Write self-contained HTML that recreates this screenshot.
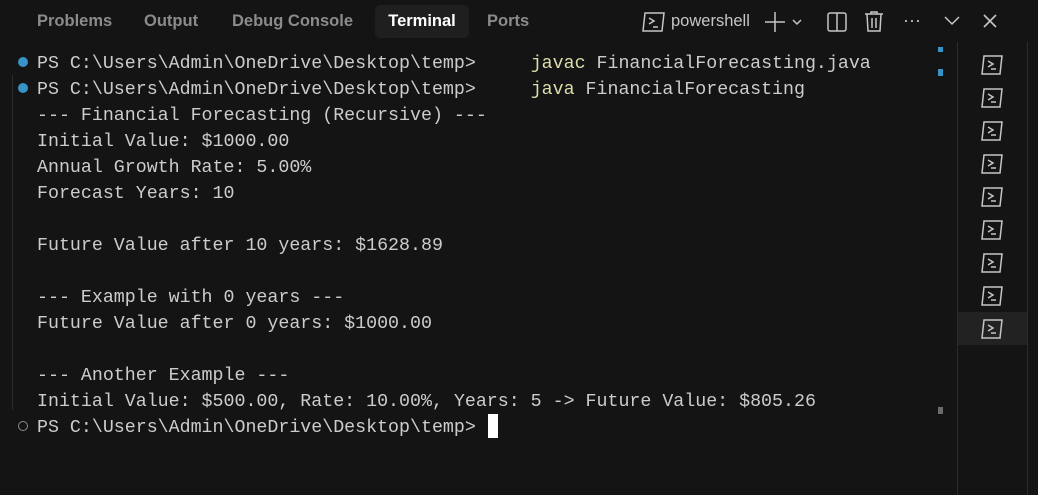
<!DOCTYPE html>
<html><head><style>
body{margin:0;width:1038px;height:495px;background:#141414;overflow:hidden;position:relative;font-family:"Liberation Sans",sans-serif}
.tab{position:absolute;top:5px;height:33px;line-height:33px;font-size:16.5px;font-weight:bold;color:#8b8b8b}
.term{position:absolute;left:37px;top:51px;font-family:"Liberation Mono",monospace;font-size:18.3px;line-height:26px;color:#cccccc;white-space:pre}
.y{color:#dcdcaa}
.dot{position:absolute;left:18px;width:10px;height:10px;border-radius:50%;background:#3794c7}
.ic{position:absolute;color:#c5c5c5}
.side{position:absolute;left:957px;top:42px;width:69px;height:453px;border-left:1px solid #2b2b2b;border-right:1px solid #2b2b2b}
.si{position:absolute;left:0;width:69px;height:33px}
</style></head><body>
<div class="tab" style="left:37px">Problems</div>
<div class="tab" style="left:144px">Output</div>
<div class="tab" style="left:232px">Debug Console</div>
<div class="tab" style="left:375px;width:94px;background:#1f1f1f;border-radius:5px;color:#fff;text-align:center">Terminal</div>
<div class="tab" style="left:487px">Ports</div>

<svg style="position:absolute;left:641px;top:10px" width="26" height="24" viewBox="0 0 26 24" fill="none" stroke="#c5c5c5" stroke-width="1.5"><path d="M4 3h19l-2 18H2z"/><path d="M8 8l5 3-5 3M12 17h5"/></svg>
<div class="tab" style="left:671px;color:#c5c5c5;font-weight:normal">powershell</div>
<svg style="position:absolute;left:764px;top:11px" width="44" height="22" fill="none" stroke="#c5c5c5" stroke-width="1.5"><path d="M11 1v20M1 11h20"/><path d="M29 9l4 4 4-4"/></svg>
<svg style="position:absolute;left:826px;top:11px" width="22" height="22" fill="none" stroke="#c5c5c5" stroke-width="1.5"><rect x="2" y="2" width="18" height="18" rx="2"/><path d="M11 2v18"/></svg>
<svg style="position:absolute;left:863px;top:10px" width="22" height="22" fill="none" stroke="#c5c5c5" stroke-width="1.5"><path d="M2 4h18M8 4V2h6v2M4 4l1 17h12l1-17M9 8v10M13 8v10"/></svg>
<div class="ic" style="left:903px;top:10px;font-size:18px">···</div>
<svg style="position:absolute;left:943px;top:14px" width="18" height="14" fill="none" stroke="#c5c5c5" stroke-width="1.5"><path d="M2 3l7 7 7-7"/></svg>
<svg style="position:absolute;left:982px;top:13px" width="16" height="16" fill="none" stroke="#c5c5c5" stroke-width="1.6"><path d="M2 2l12 12M14 2L2 14"/></svg>

<div style="position:absolute;left:12px;top:75px;width:1px;height:335px;background:#2b2b2b"></div>
<div class="dot" style="top:57px"></div>
<div class="dot" style="top:83px"></div>
<div style="position:absolute;left:18px;top:421px;width:8px;height:8px;border-radius:50%;border:1px solid #8b8b8b"></div>

<div class="term">PS C:\Users\Admin\OneDrive\Desktop\temp>     <span class="y">javac</span> FinancialForecasting.java
PS C:\Users\Admin\OneDrive\Desktop\temp>     <span class="y">java</span> FinancialForecasting
--- Financial Forecasting (Recursive) ---
Initial Value: $1000.00
Annual Growth Rate: 5.00%
Forecast Years: 10

Future Value after 10 years: $1628.89

--- Example with 0 years ---
Future Value after 0 years: $1000.00

--- Another Example ---
Initial Value: $500.00, Rate: 10.00%, Years: 5 -> Future Value: $805.26
PS C:\Users\Admin\OneDrive\Desktop\temp> </div>
<div style="position:absolute;left:488px;top:414px;width:10px;height:24px;background:#fff"></div>

<div style="position:absolute;left:938px;top:47px;width:5px;height:5px;background:#3794c7"></div>
<div style="position:absolute;left:938px;top:69px;width:5px;height:7px;background:#3794c7"></div>
<div style="position:absolute;left:938px;top:407px;width:5px;height:7px;background:#6b6b6b"></div>

<div class="side">
<div class="si" style="top:270px;background:#222"></div>
</div>
<svg style="position:absolute;left:979px;top:54px" width="26" height="290" fill="none" stroke="#c5c5c5" stroke-width="1.5">
<g id="a"><path d="M5 2h18l-2 18H3z"/><path d="M9 7l5 3-5 3M12 15h5"/></g>
<use href="#a" y="33"/><use href="#a" y="66"/><use href="#a" y="99"/><use href="#a" y="132"/><use href="#a" y="165"/><use href="#a" y="198"/><use href="#a" y="231"/><use href="#a" y="264"/>
</svg>
</body></html>
